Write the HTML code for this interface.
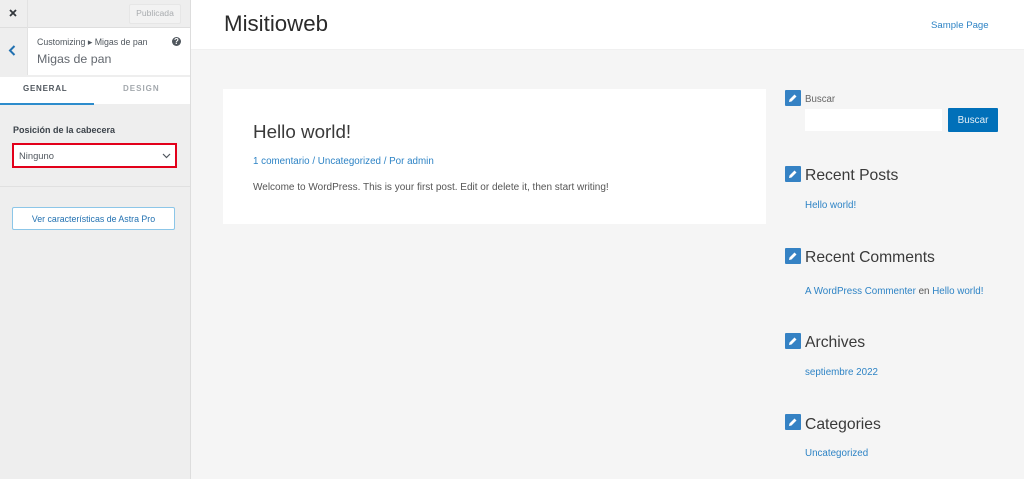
<!DOCTYPE html>
<html lang="es">
<head>
<meta charset="utf-8">
<title>Misitioweb</title>
<style>
html,body{margin:0;padding:0;width:1024px;height:479px;overflow:hidden;background:#f5f5f5;font-family:"Liberation Sans",sans-serif}
div,a,span{position:absolute;white-space:nowrap}
.b{background:#fff}
.l{color:#2d83c5}
.h{color:#3a3a3a;font-size:15.7px;line-height:20px;left:805px}
.ic{left:785px;width:16px;height:16px;background:#3582c4;border-radius:1px}
.ic svg{position:absolute;left:3px;top:3px}
.t{font-size:9.8px;line-height:12px}
</style>
</head>
<body>
<!-- sidebar -->
<div style="left:0;top:0;width:190px;height:479px;background:#eeeeee;border-right:1px solid #dddddd"></div>
<div style="left:0;top:0;width:190px;height:27px;background:#eeeeee;border-bottom:1px solid #dedede"></div>
<div style="left:27px;top:0;width:1px;height:75px;background:#e2e2e2"></div>
<svg style="position:absolute;left:9px;top:9px" width="8" height="8" viewBox="0 0 8 8"><path d="M1 1L7 7M7 1L1 7" stroke="#33383d" stroke-width="1.8" fill="none"/></svg>
<div style="left:129px;top:4px;width:50px;height:18px;background:#f2f2f2;border:1px solid #e6e6e6;border-radius:2px;color:#a9acaf;font-size:8.6px;line-height:17px;text-align:center">Publicada</div>
<div class="b" style="left:28px;top:28px;width:162px;height:47px"></div>
<svg style="position:absolute;left:8px;top:45px" width="8" height="11" viewBox="0 0 8 11"><path d="M6.5 1L2 5.5L6.5 10" stroke="#2271b1" stroke-width="2" fill="none"/></svg>
<div style="left:37px;top:36px;color:#50575e;font-size:8.8px;line-height:12px">Customizing ▸ Migas de pan</div>
<div style="left:37px;top:51px;color:#646970;font-size:12.4px;line-height:17px">Migas de pan</div>
<div style="left:172px;top:37px;width:9px;height:9px;border-radius:50%;background:#50575e;color:#fff;font-size:8px;font-weight:bold;line-height:9px;text-align:center">?</div>
<div class="b" style="left:0;top:77px;width:190px;height:27px"></div>
<div style="left:0;top:103px;width:94px;height:2px;background:#2d8ccc"></div>
<div style="left:23px;top:83px;color:#50575e;font-size:8px;font-weight:bold;letter-spacing:.75px;line-height:12px">GENERAL</div>
<div style="left:123px;top:83px;color:#a3a8ad;font-size:8px;font-weight:bold;letter-spacing:1px;line-height:12px">DESIGN</div>
<div style="left:13px;top:124px;color:#3c434a;font-size:9px;font-weight:bold;line-height:13px">Posición de la cabecera</div>
<div class="b" style="left:12px;top:143px;width:161px;height:21px;border:2px solid #e2001a"></div>
<div style="left:19px;top:150px;color:#50575e;font-size:9.4px;line-height:12px">Ninguno</div>
<svg style="position:absolute;left:162px;top:153px" width="9" height="6" viewBox="0 0 9 6"><path d="M1 1L4.5 4.5L8 1" stroke="#50575e" stroke-width="1.2" fill="none"/></svg>
<div style="left:0;top:186px;width:190px;height:1px;background:#e0e0e0"></div>
<div class="b" style="left:12px;top:207px;width:161px;height:21px;border:1px solid #8cc6e8;border-radius:2px;color:#2271b1;font-size:8.8px;line-height:22px;text-align:center">Ver características de Astra Pro</div>
<!-- header -->
<div class="b" style="left:191px;top:0;width:833px;height:49px;border-bottom:1px solid #f0f0f0"></div>
<div style="left:224px;top:10px;color:#2b2b2b;font-size:22.3px;line-height:28px">Misitioweb</div>
<div class="l" style="left:931px;top:20px;font-size:9.6px;line-height:12px">Sample Page</div>
<!-- post -->
<div class="b" style="left:223px;top:89px;width:543px;height:135px"></div>
<div style="left:253px;top:120px;color:#3a3a3a;font-size:18.8px;line-height:23px">Hello world!</div>
<div class="l t" style="left:253px;top:156px">1 comentario / Uncategorized / Por admin</div>
<div class="t" style="left:253px;top:182px;color:#555;font-size:10px">Welcome to WordPress. This is your first post. Edit or delete it, then start writing!</div>
<!-- widgets -->
<div class="ic" style="top:90px"><svg width="10" height="10" viewBox="0 0 10 10"><path d="M1 9L1.5 6.5L6.5 1.5L8.5 3.5L3.5 8.5Z" fill="#fff"/></svg></div>
<div style="left:805px;top:94px;color:#666;font-size:9.7px;line-height:12px">Buscar</div>
<div class="b" style="left:805px;top:109px;width:137px;height:22px"></div>
<div style="left:948px;top:108px;width:50px;height:24px;background:#0170b9;border-radius:1px;color:#e4eff7;font-size:9.9px;line-height:25px;text-align:center">Buscar</div>
<div class="ic" style="top:166px"><svg width="10" height="10" viewBox="0 0 10 10"><path d="M1 9L1.5 6.5L6.5 1.5L8.5 3.5L3.5 8.5Z" fill="#fff"/></svg></div>
<div class="h" style="top:166px">Recent Posts</div>
<div class="l t" style="left:805px;top:200px">Hello world!</div>
<div class="ic" style="top:248px"><svg width="10" height="10" viewBox="0 0 10 10"><path d="M1 9L1.5 6.5L6.5 1.5L8.5 3.5L3.5 8.5Z" fill="#fff"/></svg></div>
<div class="h" style="top:248px">Recent Comments</div>
<div class="t" style="left:805px;top:286px;color:#555"><span class="l" style="position:static">A WordPress Commenter</span> en <span class="l" style="position:static">Hello world!</span></div>
<div class="ic" style="top:333px"><svg width="10" height="10" viewBox="0 0 10 10"><path d="M1 9L1.5 6.5L6.5 1.5L8.5 3.5L3.5 8.5Z" fill="#fff"/></svg></div>
<div class="h" style="top:333px">Archives</div>
<div class="l t" style="left:805px;top:367px">septiembre 2022</div>
<div class="ic" style="top:414px"><svg width="10" height="10" viewBox="0 0 10 10"><path d="M1 9L1.5 6.5L6.5 1.5L8.5 3.5L3.5 8.5Z" fill="#fff"/></svg></div>
<div class="h" style="top:415px">Categories</div>
<div class="l t" style="left:805px;top:448px">Uncategorized</div>
</body>
</html>
